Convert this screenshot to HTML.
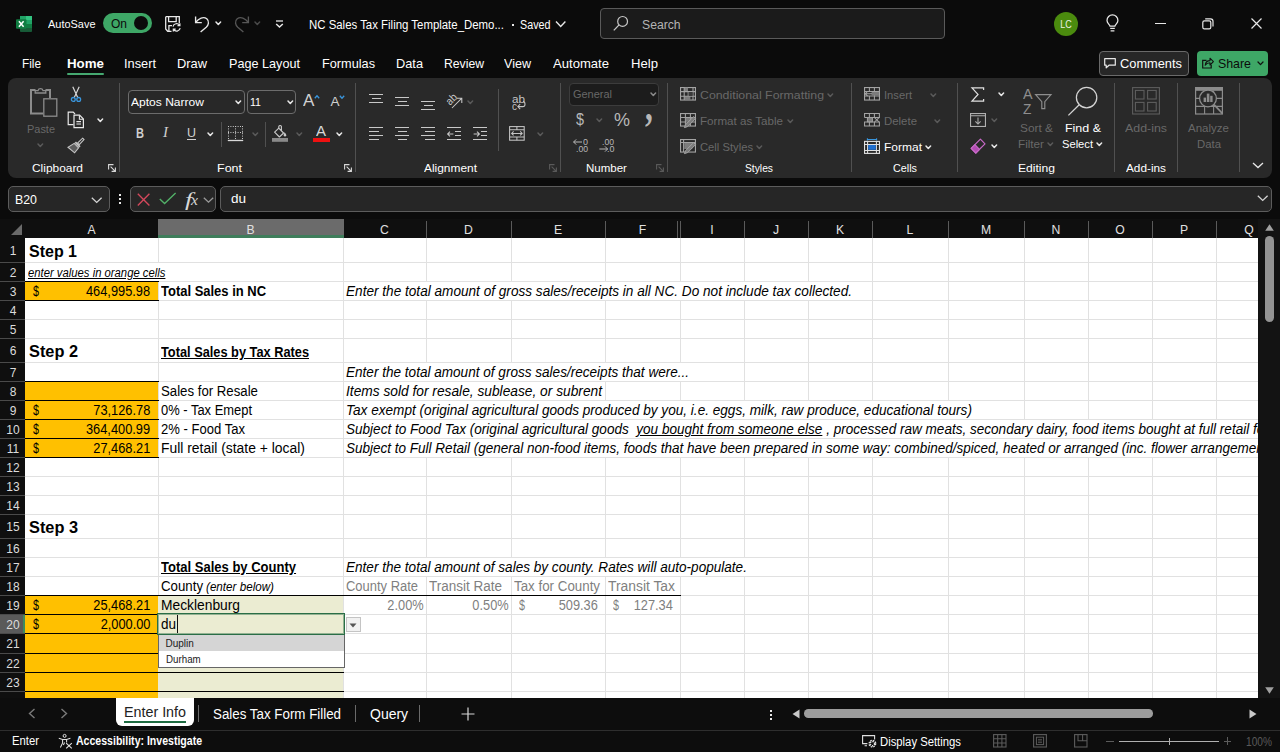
<!DOCTYPE html>
<html><head><meta charset="utf-8"><title>NC Sales Tax Filing Template_Demo - Excel</title>
<style>
html,body{margin:0;padding:0;}
body{width:1280px;height:752px;overflow:hidden;position:relative;background:#0b0b0b;font-family:"Liberation Sans",sans-serif;}
.a{position:absolute;box-sizing:border-box;}
.t{position:absolute;white-space:nowrap;overflow:visible;}
svg{overflow:visible;}
</style></head><body>
<span class="t" style="top:16.8px;height:15px;line-height:15px;font-size:11.5px;color:#fff;left:48px;transform-origin:0 50%;transform:scaleX(0.952);">AutoSave</span>
<div class="a" style="left:103px;top:13px;width:49px;height:20px;background:#3ea766;border-radius:10px;"></div>
<div class="a" style="left:134px;top:16px;width:14px;height:14px;background:#0b0b0b;border-radius:7px;"></div>
<span class="t" style="top:15.8px;height:16px;line-height:16px;font-size:12px;color:#0b0b0b;left:111px;transform-origin:0 50%;">On</span>
<span class="t" style="top:17.0px;height:16px;line-height:16px;font-size:12.5px;color:#fff;left:309.3px;transform-origin:0 50%;transform:scaleX(0.913);">NC Sales Tax Filing Template_Demo...</span>
<div class="a" style="left:511.6px;top:23.6px;width:2.4px;height:2.4px;background:#e8e8e8;"></div>
<span class="t" style="top:17.0px;height:16px;line-height:16px;font-size:12.5px;color:#fff;left:520px;transform-origin:0 50%;transform:scaleX(0.860);">Saved</span>
<div class="a" style="left:600px;top:8px;width:345px;height:31px;background:#1b1b1b;border:1px solid #5a5a5a;border-radius:4px;"></div>
<span class="t" style="top:16.6px;height:16px;line-height:16px;font-size:12.5px;color:#b4b4b4;left:642px;transform-origin:0 50%;transform:scaleX(0.975);">Search</span>
<div class="a" style="left:1054px;top:12px;width:24px;height:24px;background:#4b8b0e;border-radius:12px;"></div>
<div class="t" style="top:17.2px;height:14px;line-height:14px;font-size:10.5px;color:#e8f0e0;left:866px;width:400px;text-align:center;transform-origin:50% 50%;transform:scaleX(0.856);"><span>LC</span></div>
<span class="t" style="top:54.5px;height:17px;line-height:17px;font-size:13px;color:#fff;left:22px;transform-origin:0 50%;transform:scaleX(0.907);">File</span>
<span class="t" style="top:54.5px;height:17px;line-height:17px;font-size:13px;color:#fff;font-weight:700;left:67px;transform-origin:0 50%;transform:scaleX(1.024);">Home</span>
<span class="t" style="top:54.5px;height:17px;line-height:17px;font-size:13px;color:#fff;left:124px;transform-origin:0 50%;transform:scaleX(0.984);">Insert</span>
<span class="t" style="top:54.5px;height:17px;line-height:17px;font-size:13px;color:#fff;left:177px;transform-origin:0 50%;transform:scaleX(0.989);">Draw</span>
<span class="t" style="top:54.5px;height:17px;line-height:17px;font-size:13px;color:#fff;left:229px;transform-origin:0 50%;transform:scaleX(0.972);">Page Layout</span>
<span class="t" style="top:54.5px;height:17px;line-height:17px;font-size:13px;color:#fff;left:322px;transform-origin:0 50%;transform:scaleX(0.978);">Formulas</span>
<span class="t" style="top:54.5px;height:17px;line-height:17px;font-size:13px;color:#fff;left:396px;transform-origin:0 50%;transform:scaleX(0.983);">Data</span>
<span class="t" style="top:54.5px;height:17px;line-height:17px;font-size:13px;color:#fff;left:444px;transform-origin:0 50%;transform:scaleX(0.938);">Review</span>
<span class="t" style="top:54.5px;height:17px;line-height:17px;font-size:13px;color:#fff;left:504px;transform-origin:0 50%;transform:scaleX(0.966);">View</span>
<span class="t" style="top:54.5px;height:17px;line-height:17px;font-size:13px;color:#fff;left:553px;transform-origin:0 50%;transform:scaleX(1.006);">Automate</span>
<span class="t" style="top:54.5px;height:17px;line-height:17px;font-size:13px;color:#fff;left:631px;transform-origin:0 50%;transform:scaleX(1.009);">Help</span>
<div class="a" style="left:67px;top:72.5px;width:37px;height:2px;background:#45a870;border-radius:1px;"></div>
<div class="a" style="left:1099px;top:51px;width:90px;height:24.5px;background:#272727;border:1px solid #6a6a6a;border-radius:4px;"></div>
<span class="t" style="top:54.5px;height:17px;line-height:17px;font-size:13px;color:#fff;left:1120px;transform-origin:0 50%;transform:scaleX(0.986);">Comments</span>
<div class="a" style="left:1197px;top:51px;width:71px;height:24.5px;background:#3ea766;border-radius:4px;"></div>
<span class="t" style="top:54.5px;height:17px;line-height:17px;font-size:13px;color:#0b0b0b;left:1218px;transform-origin:0 50%;transform:scaleX(0.951);">Share</span>
<div class="a" style="left:8px;top:78px;width:1264px;height:100px;background:#292929;border-radius:8px;"></div>
<div class="a" style="left:119px;top:83px;width:1px;height:89px;background:#505050;"></div>
<div class="a" style="left:355px;top:83px;width:1px;height:89px;background:#505050;"></div>
<div class="a" style="left:498px;top:89px;width:1px;height:62px;background:#505050;"></div>
<div class="a" style="left:560px;top:83px;width:1px;height:89px;background:#505050;"></div>
<div class="a" style="left:667px;top:83px;width:1px;height:89px;background:#505050;"></div>
<div class="a" style="left:851px;top:83px;width:1px;height:89px;background:#505050;"></div>
<div class="a" style="left:957px;top:83px;width:1px;height:89px;background:#505050;"></div>
<div class="a" style="left:1114px;top:83px;width:1px;height:89px;background:#505050;"></div>
<div class="a" style="left:1177px;top:83px;width:1px;height:89px;background:#505050;"></div>
<div class="a" style="left:1239px;top:83px;width:1px;height:89px;background:#505050;"></div>
<div class="a" style="left:265px;top:122px;width:1px;height:25px;background:#505050;"></div>
<span class="t" style="top:160.7px;height:15px;line-height:15px;font-size:11.5px;color:#fff;left:32px;transform-origin:0 50%;transform:scaleX(1.036);">Clipboard</span>
<span class="t" style="top:160.7px;height:15px;line-height:15px;font-size:11.5px;color:#fff;left:217px;transform-origin:0 50%;transform:scaleX(1.086);">Font</span>
<span class="t" style="top:160.7px;height:15px;line-height:15px;font-size:11.5px;color:#fff;left:424px;transform-origin:0 50%;transform:scaleX(1.036);">Alignment</span>
<span class="t" style="top:160.7px;height:15px;line-height:15px;font-size:11.5px;color:#fff;left:586px;transform-origin:0 50%;">Number</span>
<span class="t" style="top:160.7px;height:15px;line-height:15px;font-size:11.5px;color:#fff;left:745px;transform-origin:0 50%;transform:scaleX(0.894);">Styles</span>
<span class="t" style="top:160.7px;height:15px;line-height:15px;font-size:11.5px;color:#fff;left:893px;transform-origin:0 50%;transform:scaleX(0.939);">Cells</span>
<span class="t" style="top:160.7px;height:15px;line-height:15px;font-size:11.5px;color:#fff;left:1018px;transform-origin:0 50%;transform:scaleX(1.052);">Editing</span>
<span class="t" style="top:160.7px;height:15px;line-height:15px;font-size:11.5px;color:#fff;left:1126px;transform-origin:0 50%;transform:scaleX(1.026);">Add-ins</span>
<span class="t" style="top:121.5px;height:15px;line-height:15px;font-size:11.5px;color:#686868;left:27px;transform-origin:0 50%;transform:scaleX(0.952);">Paste</span>
<div class="a" style="left:128px;top:90px;width:117px;height:24px;background:#282828;border:1px solid #6c6c6c;border-radius:4px;"></div>
<span class="t" style="top:94.5px;height:15px;line-height:15px;font-size:11.5px;color:#fff;left:131px;transform-origin:0 50%;transform:scaleX(1.048);">Aptos Narrow</span>
<div class="a" style="left:247px;top:90px;width:49px;height:24px;background:#282828;border:1px solid #6c6c6c;border-radius:4px;"></div>
<span class="t" style="top:94.5px;height:15px;line-height:15px;font-size:11.5px;color:#fff;left:250px;transform-origin:0 50%;transform:scaleX(0.920);">11</span>
<span class="t" style="top:124.0px;height:18px;line-height:18px;font-size:14px;color:#d0d0d0;font-weight:700;left:136px;transform-origin:0 50%;transform:scaleX(0.790);">B</span>
<span class="t" style="top:124.0px;height:18px;line-height:18px;font-size:14px;color:#d0d0d0;font-style:italic;font-family:'Liberation Serif',serif;left:163px;transform-origin:0 50%;transform:scaleX(1.070);">I</span>
<span class="t" style="top:124.0px;height:18px;line-height:18px;font-size:13.5px;color:#d0d0d0;left:187px;transform-origin:0 50%;transform:scaleX(0.923);">U</span>
<div class="a" style="left:186.6px;top:139.2px;width:9.6px;height:1px;background:#d0d0d0;"></div>
<div class="a" style="left:569px;top:83px;width:90px;height:23px;background:#1c1c1c;border:1px solid #3c3c3c;border-radius:4px;"></div>
<span class="t" style="top:86.5px;height:15px;line-height:15px;font-size:11.5px;color:#686868;left:573px;transform-origin:0 50%;transform:scaleX(0.953);">General</span>
<span class="t" style="top:109.0px;height:22px;line-height:22px;font-size:17px;color:#b8b8b8;left:576px;transform-origin:0 50%;transform:scaleX(0.845);">$</span>
<span class="t" style="top:108.5px;height:23px;line-height:23px;font-size:18px;color:#b8b8b8;left:614px;transform-origin:0 50%;">%</span>
<span class="t" style="top:78.5px;height:55px;line-height:55px;font-size:42px;color:#b8b8b8;font-weight:700;font-family:'Liberation Serif',serif;left:644.5px;transform-origin:0 50%;transform:scaleX(0.743);">,</span>
<span class="t" style="top:87.5px;height:15px;line-height:15px;font-size:11.5px;color:#686868;left:700px;transform-origin:0 50%;transform:scaleX(1.072);">Conditional Formatting</span>
<span class="t" style="top:113.5px;height:15px;line-height:15px;font-size:11.5px;color:#686868;left:700px;transform-origin:0 50%;transform:scaleX(1.009);">Format as Table</span>
<span class="t" style="top:139.5px;height:15px;line-height:15px;font-size:11.5px;color:#686868;left:700px;transform-origin:0 50%;transform:scaleX(0.976);">Cell Styles</span>
<span class="t" style="top:87.5px;height:15px;line-height:15px;font-size:11.5px;color:#686868;left:884px;transform-origin:0 50%;transform:scaleX(0.973);">Insert</span>
<span class="t" style="top:113.5px;height:15px;line-height:15px;font-size:11.5px;color:#686868;left:884px;transform-origin:0 50%;transform:scaleX(0.992);">Delete</span>
<span class="t" style="top:139.5px;height:15px;line-height:15px;font-size:11.5px;color:#fff;left:884px;transform-origin:0 50%;transform:scaleX(1.043);">Format</span>
<span class="t" style="top:120.5px;height:15px;line-height:15px;font-size:11.5px;color:#686868;left:1020px;transform-origin:0 50%;transform:scaleX(1.032);">Sort &amp;</span>
<span class="t" style="top:136.7px;height:15px;line-height:15px;font-size:11.5px;color:#686868;left:1018px;transform-origin:0 50%;transform:scaleX(1.017);">Filter</span>
<span class="t" style="top:120.5px;height:15px;line-height:15px;font-size:11.5px;color:#fff;left:1065px;transform-origin:0 50%;transform:scaleX(1.083);">Find &amp;</span>
<span class="t" style="top:136.7px;height:15px;line-height:15px;font-size:11.5px;color:#fff;left:1062px;transform-origin:0 50%;transform:scaleX(0.970);">Select</span>
<span class="t" style="top:120.5px;height:15px;line-height:15px;font-size:11.5px;color:#686868;left:1125px;transform-origin:0 50%;transform:scaleX(1.077);">Add-ins</span>
<span class="t" style="top:120.5px;height:15px;line-height:15px;font-size:11.5px;color:#686868;left:1188px;transform-origin:0 50%;">Analyze</span>
<span class="t" style="top:136.7px;height:15px;line-height:15px;font-size:11.5px;color:#686868;left:1197px;transform-origin:0 50%;transform:scaleX(0.988);">Data</span>
<div class="a" style="left:8px;top:186px;width:102px;height:26px;background:#262626;border:1px solid #5c5c5c;border-radius:5px;"></div>
<span class="t" style="top:190.5px;height:17px;line-height:17px;font-size:13px;color:#fff;left:15px;transform-origin:0 50%;transform:scaleX(0.951);">B20</span>
<div class="a" style="left:130px;top:186px;width:86px;height:26px;background:#262626;border:1px solid #5c5c5c;border-radius:5px;"></div>
<div class="a" style="left:220px;top:186px;width:1052px;height:26px;background:#262626;border:1px solid #5c5c5c;border-radius:5px;"></div>
<span class="t" style="top:190.0px;height:18px;line-height:18px;font-size:13.5px;color:#fff;left:231px;transform-origin:0 50%;">du</span>
<span class="t" style="top:186.5px;height:25px;line-height:25px;font-size:19px;color:#d8d8d8;font-style:italic;font-family:'Liberation Serif',serif;left:184.6px;transform-origin:0 50%;transform:scaleX(1.401);">f</span>
<span class="t" style="top:190.4px;height:20px;line-height:20px;font-size:15px;color:#d8d8d8;font-style:italic;font-family:'Liberation Serif',serif;left:191.2px;transform-origin:0 50%;transform:scaleX(1.049);">x</span>
<div class="a" style="left:118.8px;top:193.8px;width:2.4px;height:2.4px;background:#e8e8e8;"></div>
<div class="a" style="left:118.8px;top:197.8px;width:2.4px;height:2.4px;background:#e8e8e8;"></div>
<div class="a" style="left:118.8px;top:201.8px;width:2.4px;height:2.4px;background:#e8e8e8;"></div>
<div class="a" style="left:0px;top:219px;width:1280px;height:479px;background:#0f0f0f;"></div>
<div class="a" style="left:25px;top:238px;width:1233px;height:460px;background:#ffffff;"></div>
<div class="a" style="left:158px;top:219px;width:186px;height:19px;background:#6b6b6b;"></div>
<div class="a" style="left:158px;top:235px;width:186px;height:3px;background:#3f7d5b;"></div>
<div class="t" style="top:221.5px;height:16px;line-height:16px;font-size:12.2px;color:#e0e0e0;left:-108.5px;width:400px;text-align:center;transform-origin:50% 50%;"><span>A</span></div>
<div class="t" style="top:221.5px;height:16px;line-height:16px;font-size:12.2px;color:#e0e0e0;left:50.5px;width:400px;text-align:center;transform-origin:50% 50%;"><span>B</span></div>
<div class="t" style="top:221.5px;height:16px;line-height:16px;font-size:12.2px;color:#e0e0e0;left:184.5px;width:400px;text-align:center;transform-origin:50% 50%;"><span>C</span></div>
<div class="t" style="top:221.5px;height:16px;line-height:16px;font-size:12.2px;color:#e0e0e0;left:268.5px;width:400px;text-align:center;transform-origin:50% 50%;"><span>D</span></div>
<div class="a" style="left:426px;top:221px;width:1px;height:17px;background:#5a5a5a;"></div>
<div class="t" style="top:221.5px;height:16px;line-height:16px;font-size:12.2px;color:#e0e0e0;left:358.0px;width:400px;text-align:center;transform-origin:50% 50%;"><span>E</span></div>
<div class="a" style="left:511px;top:221px;width:1px;height:17px;background:#5a5a5a;"></div>
<div class="t" style="top:221.5px;height:16px;line-height:16px;font-size:12.2px;color:#e0e0e0;left:442.5px;width:400px;text-align:center;transform-origin:50% 50%;"><span>F</span></div>
<div class="a" style="left:605px;top:221px;width:1px;height:17px;background:#5a5a5a;"></div>
<div class="t" style="top:221.5px;height:16px;line-height:16px;font-size:12.2px;color:#e0e0e0;left:512.0px;width:400px;text-align:center;transform-origin:50% 50%;"><span>I</span></div>
<div class="a" style="left:680px;top:221px;width:1px;height:17px;background:#5a5a5a;"></div>
<div class="t" style="top:221.5px;height:16px;line-height:16px;font-size:12.2px;color:#e0e0e0;left:576.0px;width:400px;text-align:center;transform-origin:50% 50%;"><span>J</span></div>
<div class="a" style="left:744px;top:221px;width:1px;height:17px;background:#5a5a5a;"></div>
<div class="t" style="top:221.5px;height:16px;line-height:16px;font-size:12.2px;color:#e0e0e0;left:640.0px;width:400px;text-align:center;transform-origin:50% 50%;"><span>K</span></div>
<div class="a" style="left:808px;top:221px;width:1px;height:17px;background:#5a5a5a;"></div>
<div class="t" style="top:221.5px;height:16px;line-height:16px;font-size:12.2px;color:#e0e0e0;left:710.0px;width:400px;text-align:center;transform-origin:50% 50%;"><span>L</span></div>
<div class="a" style="left:872px;top:221px;width:1px;height:17px;background:#5a5a5a;"></div>
<div class="t" style="top:221.5px;height:16px;line-height:16px;font-size:12.2px;color:#e0e0e0;left:786.0px;width:400px;text-align:center;transform-origin:50% 50%;"><span>M</span></div>
<div class="a" style="left:948px;top:221px;width:1px;height:17px;background:#5a5a5a;"></div>
<div class="t" style="top:221.5px;height:16px;line-height:16px;font-size:12.2px;color:#e0e0e0;left:856.0px;width:400px;text-align:center;transform-origin:50% 50%;"><span>N</span></div>
<div class="a" style="left:1024px;top:221px;width:1px;height:17px;background:#5a5a5a;"></div>
<div class="t" style="top:221.5px;height:16px;line-height:16px;font-size:12.2px;color:#e0e0e0;left:920.0px;width:400px;text-align:center;transform-origin:50% 50%;"><span>O</span></div>
<div class="a" style="left:1088px;top:221px;width:1px;height:17px;background:#5a5a5a;"></div>
<div class="t" style="top:221.5px;height:16px;line-height:16px;font-size:12.2px;color:#e0e0e0;left:984.0px;width:400px;text-align:center;transform-origin:50% 50%;"><span>P</span></div>
<div class="a" style="left:1152px;top:221px;width:1px;height:17px;background:#5a5a5a;"></div>
<div class="t" style="top:221.5px;height:16px;line-height:16px;font-size:12.2px;color:#e0e0e0;left:1049.0px;width:400px;text-align:center;transform-origin:50% 50%;"><span>Q</span></div>
<div class="a" style="left:1216px;top:221px;width:1px;height:17px;background:#5a5a5a;"></div>
<div class="a" style="left:426px;top:221px;width:1px;height:17px;background:#5a5a5a;"></div>
<div class="a" style="left:677px;top:221px;width:1px;height:17px;background:#5a5a5a;"></div>
<svg class="a" style="left:10px;top:223px;" width="13" height="13" viewBox="0 0 13 13"><path d="M12 1 L12 12 L1 12 Z" fill="#6a6a6a"/></svg>
<div class="a" style="left:0px;top:614px;width:25px;height:19px;background:#5a5a5a;border-right:2px solid #3d8a5f;"></div>
<div class="t" style="top:242.3px;height:18px;line-height:18px;font-size:13.5px;color:#dcdcdc;left:-187px;width:400px;text-align:center;transform-origin:50% 50%;transform:scaleX(0.89);"><span>1</span></div>
<div class="a" style="left:0px;top:262px;width:25px;height:1px;background:#4a4a4a;"></div>
<div class="t" style="top:263.8px;height:18px;line-height:18px;font-size:13.5px;color:#dcdcdc;left:-187px;width:400px;text-align:center;transform-origin:50% 50%;transform:scaleX(0.89);"><span>2</span></div>
<div class="a" style="left:0px;top:281px;width:25px;height:1px;background:#4a4a4a;"></div>
<div class="t" style="top:282.8px;height:18px;line-height:18px;font-size:13.5px;color:#dcdcdc;left:-187px;width:400px;text-align:center;transform-origin:50% 50%;transform:scaleX(0.89);"><span>3</span></div>
<div class="a" style="left:0px;top:300px;width:25px;height:1px;background:#4a4a4a;"></div>
<div class="t" style="top:301.8px;height:18px;line-height:18px;font-size:13.5px;color:#dcdcdc;left:-187px;width:400px;text-align:center;transform-origin:50% 50%;transform:scaleX(0.89);"><span>4</span></div>
<div class="a" style="left:0px;top:319px;width:25px;height:1px;background:#4a4a4a;"></div>
<div class="t" style="top:320.8px;height:18px;line-height:18px;font-size:13.5px;color:#dcdcdc;left:-187px;width:400px;text-align:center;transform-origin:50% 50%;transform:scaleX(0.89);"><span>5</span></div>
<div class="a" style="left:0px;top:338px;width:25px;height:1px;background:#4a4a4a;"></div>
<div class="t" style="top:342.3px;height:18px;line-height:18px;font-size:13.5px;color:#dcdcdc;left:-187px;width:400px;text-align:center;transform-origin:50% 50%;transform:scaleX(0.89);"><span>6</span></div>
<div class="a" style="left:0px;top:362px;width:25px;height:1px;background:#4a4a4a;"></div>
<div class="t" style="top:363.8px;height:18px;line-height:18px;font-size:13.5px;color:#dcdcdc;left:-187px;width:400px;text-align:center;transform-origin:50% 50%;transform:scaleX(0.89);"><span>7</span></div>
<div class="a" style="left:0px;top:381px;width:25px;height:1px;background:#4a4a4a;"></div>
<div class="t" style="top:382.8px;height:18px;line-height:18px;font-size:13.5px;color:#dcdcdc;left:-187px;width:400px;text-align:center;transform-origin:50% 50%;transform:scaleX(0.89);"><span>8</span></div>
<div class="a" style="left:0px;top:400px;width:25px;height:1px;background:#4a4a4a;"></div>
<div class="t" style="top:401.8px;height:18px;line-height:18px;font-size:13.5px;color:#dcdcdc;left:-187px;width:400px;text-align:center;transform-origin:50% 50%;transform:scaleX(0.89);"><span>9</span></div>
<div class="a" style="left:0px;top:419px;width:25px;height:1px;background:#4a4a4a;"></div>
<div class="t" style="top:420.8px;height:18px;line-height:18px;font-size:13.5px;color:#dcdcdc;left:-187px;width:400px;text-align:center;transform-origin:50% 50%;transform:scaleX(0.89);"><span>10</span></div>
<div class="a" style="left:0px;top:438px;width:25px;height:1px;background:#4a4a4a;"></div>
<div class="t" style="top:439.8px;height:18px;line-height:18px;font-size:13.5px;color:#dcdcdc;left:-187px;width:400px;text-align:center;transform-origin:50% 50%;transform:scaleX(0.89);"><span>11</span></div>
<div class="a" style="left:0px;top:457px;width:25px;height:1px;background:#4a4a4a;"></div>
<div class="t" style="top:458.8px;height:18px;line-height:18px;font-size:13.5px;color:#dcdcdc;left:-187px;width:400px;text-align:center;transform-origin:50% 50%;transform:scaleX(0.89);"><span>12</span></div>
<div class="a" style="left:0px;top:476px;width:25px;height:1px;background:#4a4a4a;"></div>
<div class="t" style="top:477.8px;height:18px;line-height:18px;font-size:13.5px;color:#dcdcdc;left:-187px;width:400px;text-align:center;transform-origin:50% 50%;transform:scaleX(0.89);"><span>13</span></div>
<div class="a" style="left:0px;top:495px;width:25px;height:1px;background:#4a4a4a;"></div>
<div class="t" style="top:496.8px;height:18px;line-height:18px;font-size:13.5px;color:#dcdcdc;left:-187px;width:400px;text-align:center;transform-origin:50% 50%;transform:scaleX(0.89);"><span>14</span></div>
<div class="a" style="left:0px;top:514px;width:25px;height:1px;background:#4a4a4a;"></div>
<div class="t" style="top:518.3px;height:18px;line-height:18px;font-size:13.5px;color:#dcdcdc;left:-187px;width:400px;text-align:center;transform-origin:50% 50%;transform:scaleX(0.89);"><span>15</span></div>
<div class="a" style="left:0px;top:538px;width:25px;height:1px;background:#4a4a4a;"></div>
<div class="t" style="top:539.8px;height:18px;line-height:18px;font-size:13.5px;color:#dcdcdc;left:-187px;width:400px;text-align:center;transform-origin:50% 50%;transform:scaleX(0.89);"><span>16</span></div>
<div class="a" style="left:0px;top:557px;width:25px;height:1px;background:#4a4a4a;"></div>
<div class="t" style="top:558.8px;height:18px;line-height:18px;font-size:13.5px;color:#dcdcdc;left:-187px;width:400px;text-align:center;transform-origin:50% 50%;transform:scaleX(0.89);"><span>17</span></div>
<div class="a" style="left:0px;top:576px;width:25px;height:1px;background:#4a4a4a;"></div>
<div class="t" style="top:577.8px;height:18px;line-height:18px;font-size:13.5px;color:#dcdcdc;left:-187px;width:400px;text-align:center;transform-origin:50% 50%;transform:scaleX(0.89);"><span>18</span></div>
<div class="a" style="left:0px;top:595px;width:25px;height:1px;background:#4a4a4a;"></div>
<div class="t" style="top:596.8px;height:18px;line-height:18px;font-size:13.5px;color:#dcdcdc;left:-187px;width:400px;text-align:center;transform-origin:50% 50%;transform:scaleX(0.89);"><span>19</span></div>
<div class="a" style="left:0px;top:614px;width:25px;height:1px;background:#4a4a4a;"></div>
<div class="t" style="top:615.8px;height:18px;line-height:18px;font-size:13.5px;color:#dcdcdc;left:-187px;width:400px;text-align:center;transform-origin:50% 50%;transform:scaleX(0.89);"><span>20</span></div>
<div class="a" style="left:0px;top:633px;width:25px;height:1px;background:#4a4a4a;"></div>
<div class="t" style="top:635.3px;height:18px;line-height:18px;font-size:13.5px;color:#dcdcdc;left:-187px;width:400px;text-align:center;transform-origin:50% 50%;transform:scaleX(0.89);"><span>21</span></div>
<div class="a" style="left:0px;top:653px;width:25px;height:1px;background:#4a4a4a;"></div>
<div class="t" style="top:654.8px;height:18px;line-height:18px;font-size:13.5px;color:#dcdcdc;left:-187px;width:400px;text-align:center;transform-origin:50% 50%;transform:scaleX(0.89);"><span>22</span></div>
<div class="a" style="left:0px;top:672px;width:25px;height:1px;background:#4a4a4a;"></div>
<div class="t" style="top:673.8px;height:18px;line-height:18px;font-size:13.5px;color:#dcdcdc;left:-187px;width:400px;text-align:center;transform-origin:50% 50%;transform:scaleX(0.89);"><span>23</span></div>
<div class="a" style="left:0px;top:691px;width:25px;height:1px;background:#4a4a4a;"></div>
<div class="t" style="top:693.5px;height:18px;line-height:18px;font-size:13.5px;color:#dcdcdc;left:-187px;width:400px;text-align:center;transform-origin:50% 50%;transform:scaleX(0.915);"><span>24</span></div>
<div class="a" style="left:25px;top:262px;width:1233px;height:1px;background:#e1e1e1;"></div>
<div class="a" style="left:25px;top:281px;width:1233px;height:1px;background:#e1e1e1;"></div>
<div class="a" style="left:25px;top:300px;width:1233px;height:1px;background:#e1e1e1;"></div>
<div class="a" style="left:25px;top:319px;width:1233px;height:1px;background:#e1e1e1;"></div>
<div class="a" style="left:25px;top:338px;width:1233px;height:1px;background:#e1e1e1;"></div>
<div class="a" style="left:25px;top:362px;width:1233px;height:1px;background:#e1e1e1;"></div>
<div class="a" style="left:25px;top:381px;width:1233px;height:1px;background:#e1e1e1;"></div>
<div class="a" style="left:25px;top:400px;width:1233px;height:1px;background:#e1e1e1;"></div>
<div class="a" style="left:25px;top:419px;width:1233px;height:1px;background:#e1e1e1;"></div>
<div class="a" style="left:25px;top:438px;width:1233px;height:1px;background:#e1e1e1;"></div>
<div class="a" style="left:25px;top:457px;width:1233px;height:1px;background:#e1e1e1;"></div>
<div class="a" style="left:25px;top:476px;width:1233px;height:1px;background:#e1e1e1;"></div>
<div class="a" style="left:25px;top:495px;width:1233px;height:1px;background:#e1e1e1;"></div>
<div class="a" style="left:25px;top:514px;width:1233px;height:1px;background:#e1e1e1;"></div>
<div class="a" style="left:25px;top:538px;width:1233px;height:1px;background:#e1e1e1;"></div>
<div class="a" style="left:25px;top:557px;width:1233px;height:1px;background:#e1e1e1;"></div>
<div class="a" style="left:25px;top:576px;width:1233px;height:1px;background:#e1e1e1;"></div>
<div class="a" style="left:25px;top:595px;width:1233px;height:1px;background:#e1e1e1;"></div>
<div class="a" style="left:25px;top:614px;width:1233px;height:1px;background:#e1e1e1;"></div>
<div class="a" style="left:25px;top:633px;width:1233px;height:1px;background:#e1e1e1;"></div>
<div class="a" style="left:25px;top:653px;width:1233px;height:1px;background:#e1e1e1;"></div>
<div class="a" style="left:25px;top:672px;width:1233px;height:1px;background:#e1e1e1;"></div>
<div class="a" style="left:25px;top:691px;width:1233px;height:1px;background:#e1e1e1;"></div>
<div class="a" style="left:158px;top:238px;width:1px;height:460px;background:#e1e1e1;"></div>
<div class="a" style="left:343px;top:238px;width:1px;height:460px;background:#e1e1e1;"></div>
<div class="a" style="left:426px;top:238px;width:1px;height:460px;background:#e1e1e1;"></div>
<div class="a" style="left:511px;top:238px;width:1px;height:460px;background:#e1e1e1;"></div>
<div class="a" style="left:605px;top:238px;width:1px;height:460px;background:#e1e1e1;"></div>
<div class="a" style="left:680px;top:238px;width:1px;height:460px;background:#e1e1e1;"></div>
<div class="a" style="left:744px;top:238px;width:1px;height:460px;background:#e1e1e1;"></div>
<div class="a" style="left:808px;top:238px;width:1px;height:460px;background:#e1e1e1;"></div>
<div class="a" style="left:872px;top:238px;width:1px;height:460px;background:#e1e1e1;"></div>
<div class="a" style="left:948px;top:238px;width:1px;height:460px;background:#e1e1e1;"></div>
<div class="a" style="left:1024px;top:238px;width:1px;height:460px;background:#e1e1e1;"></div>
<div class="a" style="left:1088px;top:238px;width:1px;height:460px;background:#e1e1e1;"></div>
<div class="a" style="left:1152px;top:238px;width:1px;height:460px;background:#e1e1e1;"></div>
<div class="a" style="left:1216px;top:238px;width:1px;height:460px;background:#e1e1e1;"></div>
<div class="a" style="left:158px;top:263px;width:12px;height:18px;background:#fff;"></div>
<div class="a" style="left:344px;top:282px;width:516px;height:18px;background:#fff;"></div>
<div class="a" style="left:344px;top:363px;width:356px;height:18px;background:#fff;"></div>
<div class="a" style="left:344px;top:382px;width:261px;height:18px;background:#fff;"></div>
<div class="a" style="left:344px;top:401px;width:636px;height:18px;background:#fff;"></div>
<div class="a" style="left:344px;top:420px;width:914px;height:18px;background:#fff;"></div>
<div class="a" style="left:344px;top:439px;width:914px;height:18px;background:#fff;"></div>
<div class="a" style="left:344px;top:558px;width:416px;height:18px;background:#fff;"></div>
<div class="a" style="left:25px;top:281px;width:133px;height:19px;background:#ffc000;"></div>
<div class="a" style="left:25px;top:381px;width:133px;height:76px;background:#ffc000;"></div>
<div class="a" style="left:25px;top:595px;width:133px;height:116px;background:#ffc000;"></div>
<div class="a" style="left:158px;top:595px;width:185px;height:116px;background:#ebecd2;"></div>
<div class="a" style="left:25px;top:698px;width:1240px;height:0px;"></div>
<div class="a" style="left:25px;top:281px;width:134px;height:1px;background:#000;"></div>
<div class="a" style="left:25px;top:300px;width:134px;height:1px;background:#000;"></div>
<div class="a" style="left:25px;top:381px;width:134px;height:1px;background:#000;"></div>
<div class="a" style="left:25px;top:400px;width:134px;height:1px;background:#000;"></div>
<div class="a" style="left:25px;top:419px;width:134px;height:1px;background:#000;"></div>
<div class="a" style="left:25px;top:438px;width:134px;height:1px;background:#000;"></div>
<div class="a" style="left:25px;top:457px;width:134px;height:1px;background:#000;"></div>
<div class="a" style="left:25px;top:595px;width:656px;height:1px;background:#000;"></div>
<div class="a" style="left:25px;top:614px;width:134px;height:1px;background:#000;"></div>
<div class="a" style="left:25px;top:633px;width:134px;height:1px;background:#000;"></div>
<div class="a" style="left:25px;top:653px;width:134px;height:1px;background:#000;"></div>
<div class="a" style="left:25px;top:672px;width:134px;height:1px;background:#000;"></div>
<div class="a" style="left:25px;top:691px;width:134px;height:1px;background:#000;"></div>
<div class="a" style="left:158px;top:653px;width:186px;height:1px;background:#000;"></div>
<div class="a" style="left:158px;top:672px;width:186px;height:1px;background:#000;"></div>
<div class="a" style="left:158px;top:691px;width:186px;height:1px;background:#000;"></div>
<div class="a" style="left:158px;top:614px;width:186px;height:1px;background:#c8c8b4;"></div>
<span class="t" style="top:241.0px;height:22px;line-height:22px;font-size:17px;color:#000;font-weight:700;left:29px;transform-origin:0 50%;transform:scaleX(0.941);">Step 1</span>
<span class="t" style="top:341.2px;height:22px;line-height:22px;font-size:17px;color:#000;font-weight:700;left:29px;transform-origin:0 50%;transform:scaleX(0.960);">Step 2</span>
<span class="t" style="top:517.0px;height:22px;line-height:22px;font-size:17px;color:#000;font-weight:700;left:29px;transform-origin:0 50%;transform:scaleX(0.960);">Step 3</span>
<span class="t" style="top:265.2px;height:16px;line-height:16px;font-size:12.5px;color:#000;font-style:italic;text-decoration:underline;left:28px;transform-origin:0 50%;transform:scaleX(0.903);">enter values in orange cells</span>
<span class="t" style="top:282.2px;height:18px;line-height:18px;font-size:14px;color:#000;left:33px;transform-origin:0 50%;transform:scaleX(0.770);">$</span>
<span class="t" style="top:282.2px;height:18px;line-height:18px;font-size:14px;color:#000;right:1130px;transform-origin:100% 50%;transform:scaleX(0.915);">464,995.98</span>
<span class="t" style="top:401.2px;height:18px;line-height:18px;font-size:14px;color:#000;left:33px;transform-origin:0 50%;transform:scaleX(0.770);">$</span>
<span class="t" style="top:401.2px;height:18px;line-height:18px;font-size:14px;color:#000;right:1130px;transform-origin:100% 50%;transform:scaleX(0.915);">73,126.78</span>
<span class="t" style="top:420.2px;height:18px;line-height:18px;font-size:14px;color:#000;left:33px;transform-origin:0 50%;transform:scaleX(0.770);">$</span>
<span class="t" style="top:420.2px;height:18px;line-height:18px;font-size:14px;color:#000;right:1130px;transform-origin:100% 50%;transform:scaleX(0.915);">364,400.99</span>
<span class="t" style="top:439.2px;height:18px;line-height:18px;font-size:14px;color:#000;left:33px;transform-origin:0 50%;transform:scaleX(0.770);">$</span>
<span class="t" style="top:439.2px;height:18px;line-height:18px;font-size:14px;color:#000;right:1130px;transform-origin:100% 50%;transform:scaleX(0.915);">27,468.21</span>
<span class="t" style="top:596.2px;height:18px;line-height:18px;font-size:14px;color:#000;left:33px;transform-origin:0 50%;transform:scaleX(0.770);">$</span>
<span class="t" style="top:596.2px;height:18px;line-height:18px;font-size:14px;color:#000;right:1130px;transform-origin:100% 50%;transform:scaleX(0.915);">25,468.21</span>
<span class="t" style="top:615.2px;height:18px;line-height:18px;font-size:14px;color:#000;left:33px;transform-origin:0 50%;transform:scaleX(0.770);">$</span>
<span class="t" style="top:615.2px;height:18px;line-height:18px;font-size:14px;color:#000;right:1130px;transform-origin:100% 50%;transform:scaleX(0.915);">2,000.00</span>
<span class="t" style="top:282.2px;height:18px;line-height:18px;font-size:14px;color:#000;font-weight:700;left:161px;transform-origin:0 50%;transform:scaleX(0.927);">Total Sales in NC</span>
<span class="t" style="top:282.2px;height:18px;line-height:18px;font-size:14px;color:#000;font-style:italic;left:346px;transform-origin:0 50%;transform:scaleX(0.972);">Enter the total amount of gross sales/receipts in all NC. Do not include tax collected.</span>
<span class="t" style="top:343.0px;height:18px;line-height:18px;font-size:14px;color:#000;font-weight:700;text-decoration:underline;left:161px;transform-origin:0 50%;transform:scaleX(0.913);">Total Sales by Tax Rates</span>
<span class="t" style="top:363.2px;height:18px;line-height:18px;font-size:14px;color:#000;font-style:italic;left:346px;transform-origin:0 50%;transform:scaleX(0.969);">Enter the total amount of gross sales/receipts that were...</span>
<span class="t" style="top:382.2px;height:18px;line-height:18px;font-size:14px;color:#000;left:161px;transform-origin:0 50%;transform:scaleX(0.944);">Sales for Resale</span>
<span class="t" style="top:382.2px;height:18px;line-height:18px;font-size:14px;color:#000;font-style:italic;left:346px;transform-origin:0 50%;transform:scaleX(0.982);">Items sold for resale, sublease, or subrent</span>
<span class="t" style="top:401.2px;height:18px;line-height:18px;font-size:14px;color:#000;left:161px;transform-origin:0 50%;transform:scaleX(0.923);">0% - Tax Emept</span>
<span class="t" style="top:401.2px;height:18px;line-height:18px;font-size:14px;color:#000;font-style:italic;left:346px;transform-origin:0 50%;transform:scaleX(0.971);">Tax exempt (original agricultural goods produced by you, i.e. eggs, milk, raw produce, educational tours)</span>
<span class="t" style="top:420.2px;height:18px;line-height:18px;font-size:14px;color:#000;left:161px;transform-origin:0 50%;transform:scaleX(0.933);">2% - Food Tax</span>
<span class="t" style="top:439.2px;height:18px;line-height:18px;font-size:14px;color:#000;left:161px;transform-origin:0 50%;transform:scaleX(0.992);">Full retail (state + local)</span>
<div class="a" style="left:344px;top:420px;width:914px;height:38px;overflow:hidden;">
<span class="t" style="top:0.2px;height:18px;line-height:18px;font-size:14px;color:#000;font-style:italic;left:2px;transform-origin:0 50%;transform:scaleX(0.968);">Subject to Food Tax (original agricultural goods&nbsp; <u>you bought from someone else</u> , processed raw meats, secondary dairy, food items bought at full retail for</span>
<span class="t" style="top:19.2px;height:18px;line-height:18px;font-size:14px;color:#000;font-style:italic;left:2px;transform-origin:0 50%;transform:scaleX(0.965);">Subject to Full Retail (general non-food items, foods that have been prepared in some way: combined/spiced, heated or arranged (inc. flower arrangements</span>
</div>
<span class="t" style="top:558.0px;height:18px;line-height:18px;font-size:14px;color:#000;font-weight:700;text-decoration:underline;left:161px;transform-origin:0 50%;transform:scaleX(0.930);">Total Sales by County</span>
<span class="t" style="top:558.2px;height:18px;line-height:18px;font-size:14px;color:#000;font-style:italic;left:346px;transform-origin:0 50%;transform:scaleX(0.969);">Enter the total amount of sales by county. Rates will auto-populate.</span>
<span class="t" style="top:577.2px;height:18px;line-height:18px;font-size:14px;color:#000;left:161px;transform-origin:0 50%;transform:scaleX(0.947);">County</span>
<span class="t" style="top:578.7px;height:16px;line-height:16px;font-size:12.5px;color:#000;font-style:italic;left:206px;transform-origin:0 50%;transform:scaleX(0.932);">(enter below)</span>
<span class="t" style="top:577.2px;height:18px;line-height:18px;font-size:14px;color:#7f7f7f;left:346px;transform-origin:0 50%;transform:scaleX(0.925);">County Rate</span>
<span class="t" style="top:577.2px;height:18px;line-height:18px;font-size:14px;color:#7f7f7f;left:429px;transform-origin:0 50%;transform:scaleX(0.964);">Transit Rate</span>
<span class="t" style="top:577.2px;height:18px;line-height:18px;font-size:14px;color:#7f7f7f;left:514px;transform-origin:0 50%;transform:scaleX(0.953);">Tax for County</span>
<span class="t" style="top:577.2px;height:18px;line-height:18px;font-size:14px;color:#7f7f7f;left:608px;transform-origin:0 50%;transform:scaleX(0.990);">Transit Tax</span>
<span class="t" style="top:596.2px;height:18px;line-height:18px;font-size:14px;color:#000;left:161px;transform-origin:0 50%;transform:scaleX(0.986);">Mecklenburg</span>
<span class="t" style="top:596.2px;height:18px;line-height:18px;font-size:14px;color:#7f7f7f;right:856px;transform-origin:100% 50%;transform:scaleX(0.915);">2.00%</span>
<span class="t" style="top:596.2px;height:18px;line-height:18px;font-size:14px;color:#7f7f7f;right:771px;transform-origin:100% 50%;transform:scaleX(0.915);">0.50%</span>
<span class="t" style="top:596.2px;height:18px;line-height:18px;font-size:14px;color:#7f7f7f;left:519px;transform-origin:0 50%;transform:scaleX(0.770);">$</span>
<span class="t" style="top:596.2px;height:18px;line-height:18px;font-size:14px;color:#7f7f7f;right:682px;transform-origin:100% 50%;transform:scaleX(0.915);">509.36</span>
<span class="t" style="top:596.2px;height:18px;line-height:18px;font-size:14px;color:#7f7f7f;left:613px;transform-origin:0 50%;transform:scaleX(0.770);">$</span>
<span class="t" style="top:596.2px;height:18px;line-height:18px;font-size:14px;color:#7f7f7f;right:607px;transform-origin:100% 50%;transform:scaleX(0.915);">127.34</span>
<div class="a" style="left:157px;top:613px;width:188px;height:22px;border:1px solid #2a6e46;box-shadow:inset 0 0 0 1px rgba(42,110,70,0.45);background:#ebecd2;"></div>
<span class="t" style="top:615.2px;height:18px;line-height:18px;font-size:14px;color:#000;left:161.2px;transform-origin:0 50%;transform:scaleX(0.963);">du</span>
<div class="a" style="left:177px;top:615px;width:1px;height:18px;background:#111;"></div>
<div class="a" style="left:346px;top:616.6px;width:14.6px;height:15.6px;background:#f1f1f1;border:1px solid #c4c4c4;"></div>
<svg class="a" style="left:348.7px;top:622.6px;" width="8" height="5" viewBox="0 0 8 5"><path d="M0.5 0.5 L7.5 0.5 L4 4.5 Z" fill="#555"/></svg>
<div class="a" style="left:158px;top:634.6px;width:187px;height:33.4px;background:#fff;border:1px solid #666;border-top:none;"></div>
<div class="a" style="left:159px;top:634.6px;width:185px;height:16px;background:#d5d5d5;"></div>
<span class="t" style="top:637.0px;height:13px;line-height:13px;font-size:10px;color:#1a1a1a;left:165.5px;transform-origin:0 50%;">Duplin</span>
<span class="t" style="top:652.5px;height:13px;line-height:13px;font-size:10px;color:#1a1a1a;left:165.5px;transform-origin:0 50%;transform:scaleX(0.975);">Durham</span>
<div class="a" style="left:1258px;top:219px;width:22px;height:479px;background:#131313;"></div>
<div class="a" style="left:1265px;top:236px;width:9px;height:86px;background:#949494;border-radius:4.5px;"></div>
<svg class="a" style="left:1265px;top:224px;" width="9" height="7" viewBox="0 0 9 7"><path d="M4.5 0.3 L8.8 6.8 L0.2 6.8 Z" fill="#a0a0a0"/></svg>
<svg class="a" style="left:1265px;top:687px;" width="9" height="7" viewBox="0 0 9 7"><path d="M4.5 6.8 L8.8 0.2 L0.2 0.2 Z" fill="#a0a0a0"/></svg>
<div class="a" style="left:0px;top:698px;width:1280px;height:32px;background:#0d0d0d;"></div>
<div class="a" style="left:116px;top:698px;width:78px;height:28px;background:#fff;border-radius:0 0 6px 6px;"></div>
<span class="t" style="top:703.0px;height:18px;line-height:18px;font-size:14px;color:#222;left:124px;transform-origin:0 50%;transform:scaleX(1.021);">Enter Info</span>
<div class="a" style="left:124px;top:721px;width:62px;height:2px;background:#1e6b41;"></div>
<span class="t" style="top:705.0px;height:18px;line-height:18px;font-size:14px;color:#fff;left:213px;transform-origin:0 50%;transform:scaleX(0.953);">Sales Tax Form Filled</span>
<span class="t" style="top:705.0px;height:18px;line-height:18px;font-size:14px;color:#fff;left:370px;transform-origin:0 50%;">Query</span>
<div class="a" style="left:198px;top:705px;width:1px;height:17px;background:#6a6a6a;"></div>
<div class="a" style="left:355px;top:705px;width:1px;height:17px;background:#6a6a6a;"></div>
<div class="a" style="left:419px;top:705px;width:1px;height:17px;background:#6a6a6a;"></div>
<div class="a" style="left:804px;top:709px;width:348.5px;height:8.6px;background:#9c9c9c;border-radius:4.3px;"></div>
<svg class="a" style="left:791.5px;top:708.5px;" width="8" height="10" viewBox="0 0 8 10"><path d="M7.5 0.5 L7.5 9.5 L0.5 5 Z" fill="#c8c8c8"/></svg>
<svg class="a" style="left:1249px;top:708.5px;" width="8" height="10" viewBox="0 0 8 10"><path d="M0.5 0.5 L0.5 9.5 L7.5 5 Z" fill="#c8c8c8"/></svg>
<div class="a" style="left:770px;top:709.6999999999999px;width:2.2px;height:2.2px;background:#e8e8e8;"></div>
<div class="a" style="left:770px;top:713.9px;width:2.2px;height:2.2px;background:#e8e8e8;"></div>
<div class="a" style="left:770px;top:718.1px;width:2.2px;height:2.2px;background:#e8e8e8;"></div>
<svg class="a" style="left:460.5px;top:706.7px;" width="14" height="14" viewBox="0 0 14 14"><path d="M7 0.5 V13.5 M0.5 7 H13.5" stroke="#d8d8d8" stroke-width="1.2" fill="none"/></svg>
<svg class="a" style="left:28px;top:708px;" width="8" height="11" viewBox="0 0 8 11"><path d="M6.5 1 L1.5 5.5 L6.5 10" stroke="#7a7a7a" stroke-width="1.4" fill="none"/></svg>
<svg class="a" style="left:60px;top:708px;" width="8" height="11" viewBox="0 0 8 11"><path d="M1.5 1 L6.5 5.5 L1.5 10" stroke="#7a7a7a" stroke-width="1.4" fill="none"/></svg>
<div class="a" style="left:0px;top:730px;width:1280px;height:22px;background:#0d0d0d;border-top:1px solid #2e2e2e;"></div>
<span class="t" style="top:733.0px;height:16px;line-height:16px;font-size:12px;color:#fff;left:12px;transform-origin:0 50%;transform:scaleX(0.941);">Enter</span>
<span class="t" style="top:733.0px;height:16px;line-height:16px;font-size:12px;color:#fff;font-weight:700;left:76px;transform-origin:0 50%;transform:scaleX(0.879);">Accessibility: Investigate</span>
<span class="t" style="top:733.5px;height:16px;line-height:16px;font-size:12px;color:#fff;left:880px;transform-origin:0 50%;transform:scaleX(0.941);">Display Settings</span>
<span class="t" style="top:733.5px;height:16px;line-height:16px;font-size:12px;color:#5a5a5a;left:1246px;transform-origin:0 50%;transform:scaleX(0.847);">100%</span>
<div class="a" style="left:1119px;top:740.6px;width:100px;height:1px;background:#b0b0b0;"></div>
<div class="a" style="left:1168.6px;top:737.6px;width:1px;height:7px;background:#b0b0b0;"></div>
<svg class="a" style="left:16px;top:16px;" width="16" height="16" viewBox="0 0 16 16"><rect x="4" y="0" width="12" height="15.5" rx="1" fill="#21a366"/>
<rect x="4" y="0" width="6" height="4" fill="#21a366"/><rect x="10" y="0" width="6" height="4" fill="#33c481"/>
<rect x="4" y="4" width="6" height="4" fill="#107c41"/><rect x="10" y="4" width="6" height="4" fill="#21a366"/>
<rect x="4" y="8" width="6" height="4" fill="#185c37"/><rect x="10" y="8" width="6" height="4" fill="#107c41"/>
<rect x="4" y="12" width="12" height="3.5" fill="#185c37"/>
<rect x="0" y="3.2" width="10.5" height="9.6" rx="1" fill="#107c41"/>
<path d="M2.9 5.3 L7.6 10.8 M7.6 5.3 L2.9 10.8" stroke="#fff" stroke-width="1.5"/></svg>
<svg class="a" style="left:165px;top:16px;" width="16" height="16" viewBox="0 0 16 16"><path d="M0.7 0.7 H14.3 V7 M0.7 0.7 V13 L2.7 15.3 H6.5 M3.6 0.7 V5.6 H11.2 V0.7 M3.9 15 V9.6 H7" stroke="#e8e8e8" stroke-width="1.3" fill="none"/>
<path d="M8 10.6 A3.6 3.6 0 0 1 14.6 9.4 M14.9 7.3 V9.7 H12.5 M15.2 12.2 A3.6 3.6 0 0 1 8.6 13.4 M8.3 15.5 V13.1 H10.7" stroke="#e8e8e8" stroke-width="1.2" fill="none"/></svg>
<svg class="a" style="left:194px;top:15px;" width="17" height="18" viewBox="0 0 17 18"><path d="M1.6 1.5 V7.6 H7.8 M2 7.2 C4.5 3.3 9.5 1.2 12.8 3.8 C15.6 6.2 14.6 10 12.2 12.2 L6.6 17" stroke="#e8e8e8" stroke-width="1.35" fill="none" stroke-linejoin="miter"/></svg>
<svg class="a" style="left:215.2px;top:21.25px;" width="6.6" height="4.5" viewBox="0 0 6.6 4.5"><path d="M1 1 L3.3 3.5 L5.6 1" stroke="#e8e8e8" stroke-width="1.5" fill="none" stroke-linecap="round" stroke-linejoin="round"/></svg>
<svg class="a" style="left:233px;top:15px;" width="17" height="18" viewBox="0 0 17 18"><path d="M15.4 1.5 V7.6 H9.2 M15 7.2 C12.5 3.3 7.5 1.2 4.2 3.8 C1.4 6.2 2.4 10 4.8 12.2 L10.4 17" stroke="#565656" stroke-width="1.35" fill="none"/></svg>
<svg class="a" style="left:254.2px;top:21.25px;" width="6.6" height="4.5" viewBox="0 0 6.6 4.5"><path d="M1 1 L3.3 3.5 L5.6 1" stroke="#4a4a4a" stroke-width="1.5" fill="none" stroke-linecap="round" stroke-linejoin="round"/></svg>
<svg class="a" style="left:275px;top:19px;" width="9" height="9" viewBox="0 0 9 9"><path d="M1 2 H8" stroke="#e8e8e8" stroke-width="1.3"/><path d="M1.2 5 L4.5 8 L7.8 5" stroke="#e8e8e8" stroke-width="1.5" fill="none"/></svg>
<svg class="a" style="left:555px;top:20px;" width="12" height="8" viewBox="0 0 12 8"><path d="M1 1.5 L5.7 6.5 L10.4 1.5" stroke="#e8e8e8" stroke-width="1.4" fill="none"/></svg>
<svg class="a" style="left:612px;top:14px;" width="18" height="18" viewBox="0 0 18 18"><circle cx="10.6" cy="7.4" r="4.9" stroke="#c8c8c8" stroke-width="1.2" fill="none"/><path d="M7.1 10.9 L1.8 16.4" stroke="#c8c8c8" stroke-width="1.3"/></svg>
<svg class="a" style="left:1106px;top:15px;" width="13" height="18" viewBox="0 0 13 18"><path d="M4 11.2 C3.6 9.3 1 8.3 1 5.4 A5.4 5.4 0 0 1 11.9 5.4 C11.9 8.3 9.3 9.3 8.9 11.2 Z M4.2 13.4 H8.8 M4.6 15.8 H8.4" stroke="#e8e8e8" stroke-width="1.25" fill="none"/></svg>
<div class="a" style="left:1155px;top:22.6px;width:10.5px;height:1.2px;background:#e8e8e8;"></div>
<svg class="a" style="left:1202px;top:18px;" width="12" height="12" viewBox="0 0 12 12"><rect x="0.8" y="2.8" width="8" height="8" rx="1.6" stroke="#e8e8e8" stroke-width="1.2" fill="none"/><path d="M3.2 0.8 H8.6 A2.4 2.4 0 0 1 11 3.2 V8.6" stroke="#e8e8e8" stroke-width="1.2" fill="none"/></svg>
<svg class="a" style="left:1251px;top:18px;" width="11" height="11" viewBox="0 0 11 11"><path d="M0.5 0.5 L10.5 10.5 M10.5 0.5 L0.5 10.5" stroke="#e8e8e8" stroke-width="1.2"/></svg>
<svg class="a" style="left:1104px;top:58px;" width="13" height="11" viewBox="0 0 13 11"><path d="M0.7 0.7 H11.3 V7.2 H5 L2.2 9.8 V7.2 H0.7 Z" stroke="#e8e8e8" stroke-width="1.2" fill="none" stroke-linejoin="round"/></svg>
<svg class="a" style="left:1202px;top:57px;" width="12" height="12" viewBox="0 0 12 12"><path d="M4.5 3.3 H0.7 V11 H9.2 V7.8" stroke="#111" stroke-width="1.2" fill="none"/><path d="M3.2 8.2 C3.6 5.2 5.4 3.6 8 3.6 V1.2 L11.4 4.6 L8 8 V5.8 C5.8 5.8 4.4 6.6 3.2 8.2 Z" stroke="#111" stroke-width="1.1" fill="none" stroke-linejoin="round"/></svg>
<svg class="a" style="left:1256.5px;top:61.2px;" width="7" height="4.6" viewBox="0 0 7 4.6"><path d="M1 1 L3.5 3.6 L6 1" stroke="#111" stroke-width="1.3" fill="none" stroke-linecap="round" stroke-linejoin="round"/></svg>
<svg class="a" style="left:108px;top:164px;" width="8" height="8" viewBox="0 0 8 8"><path d="M0.6 5.5 V0.6 H5.5" stroke="#d8d8d8" stroke-width="1.1" fill="none"/><path d="M2.6 2.6 L7.3 7.3 M7.4 3.6 V7.4 H3.6" stroke="#d8d8d8" stroke-width="1.1" fill="none"/></svg>
<svg class="a" style="left:344px;top:164px;" width="8" height="8" viewBox="0 0 8 8"><path d="M0.6 5.5 V0.6 H5.5" stroke="#d8d8d8" stroke-width="1.1" fill="none"/><path d="M2.6 2.6 L7.3 7.3 M7.4 3.6 V7.4 H3.6" stroke="#d8d8d8" stroke-width="1.1" fill="none"/></svg>
<svg class="a" style="left:549px;top:164px;" width="8" height="8" viewBox="0 0 8 8"><path d="M0.6 5.5 V0.6 H5.5" stroke="#5a5a5a" stroke-width="1.1" fill="none"/><path d="M2.6 2.6 L7.3 7.3 M7.4 3.6 V7.4 H3.6" stroke="#5a5a5a" stroke-width="1.1" fill="none"/></svg>
<svg class="a" style="left:656px;top:164px;" width="8" height="8" viewBox="0 0 8 8"><path d="M0.6 5.5 V0.6 H5.5" stroke="#5a5a5a" stroke-width="1.1" fill="none"/><path d="M2.6 2.6 L7.3 7.3 M7.4 3.6 V7.4 H3.6" stroke="#5a5a5a" stroke-width="1.1" fill="none"/></svg>
<svg class="a" style="left:30px;top:87px;" width="28" height="30" viewBox="0 0 28 30"><path d="M5.5 3 H1 V26.5 H13" stroke="#8c8c8c" stroke-width="2" fill="none"/><path d="M15.5 3 H20 V11" stroke="#8c8c8c" stroke-width="2" fill="none"/>
<path d="M5.2 6 V3.6 H8 A2.6 2.6 0 0 1 13 3.6 H15.8 V6 Z" stroke="#8c8c8c" stroke-width="1.3" fill="#292929"/>
<rect x="13.8" y="11.8" width="13" height="17.4" stroke="#8c8c8c" stroke-width="1.3" fill="#292929"/></svg>
<svg class="a" style="left:37.2px;top:142.75px;" width="6.6" height="4.5" viewBox="0 0 6.6 4.5"><path d="M1 1 L3.3 3.5 L5.6 1" stroke="#5a5a5a" stroke-width="1.5" fill="none" stroke-linecap="round" stroke-linejoin="round"/></svg>
<svg class="a" style="left:70px;top:86px;" width="12" height="17" viewBox="0 0 12 17"><path d="M2.8 0.8 L7.6 11.2 M9.2 0.8 L4.4 11.2" stroke="#d8d8d8" stroke-width="1.2" fill="none"/>
<circle cx="3.3" cy="13.4" r="1.9" stroke="#3a96dd" stroke-width="1.3" fill="none"/><circle cx="8.7" cy="13.4" r="1.9" stroke="#3a96dd" stroke-width="1.3" fill="none"/></svg>
<svg class="a" style="left:67px;top:111px;" width="18" height="18" viewBox="0 0 18 18"><path d="M6.5 13.6 H1.2 V1.2 H6.2 L8 3" stroke="#e8e8e8" stroke-width="1.2" fill="none"/>
<path d="M7 4.2 H12.6 L16.4 8 V16.6 H7 Z" stroke="#e8e8e8" stroke-width="1.2" fill="#292929"/><path d="M12.4 4.4 V8.2 H16.2" stroke="#e8e8e8" stroke-width="1.1" fill="none"/>
<path d="M9.4 10.6 H14 M9.4 13 H14" stroke="#e8e8e8" stroke-width="1.1"/></svg>
<svg class="a" style="left:96.5px;top:118.25px;" width="6.6" height="4.5" viewBox="0 0 6.6 4.5"><path d="M1 1 L3.3 3.5 L5.6 1" stroke="#e8e8e8" stroke-width="1.5" fill="none" stroke-linecap="round" stroke-linejoin="round"/></svg>
<svg class="a" style="left:67px;top:137px;" width="18" height="17" viewBox="0 0 18 17"><path d="M15.6 1.2 L17 2.6 L12.2 7.6 L10.6 6 Z" stroke="#c4c4c4" stroke-width="1.1" fill="none"/>
<path d="M9 4.6 L13.6 9.2 L12.2 10.4 L7.6 5.8 Z" fill="#c4c4c4"/>
<path d="M7.2 6.4 L1 10.2 L7.6 15.8 L11.6 10.8 Z" stroke="#c4c4c4" stroke-width="1.1" fill="#8a8a8a" fill-opacity="0.55"/></svg>
<div class="a" style="left:221px;top:122px;width:1px;height:25px;background:#505050;"></div>
<svg class="a" style="left:235.2px;top:100.25px;" width="6.6" height="4.5" viewBox="0 0 6.6 4.5"><path d="M1 1 L3.3 3.5 L5.6 1" stroke="#e8e8e8" stroke-width="1.5" fill="none" stroke-linecap="round" stroke-linejoin="round"/></svg>
<svg class="a" style="left:286.5px;top:100.25px;" width="6.6" height="4.5" viewBox="0 0 6.6 4.5"><path d="M1 1 L3.3 3.5 L5.6 1" stroke="#e8e8e8" stroke-width="1.5" fill="none" stroke-linecap="round" stroke-linejoin="round"/></svg>
<span class="t" style="top:90.0px;height:22px;line-height:22px;font-size:17px;color:#d0d0d0;left:302.8px;transform-origin:0 50%;transform:scaleX(1.005);">A</span>
<svg class="a" style="left:313.5px;top:94.5px;" width="6" height="4" viewBox="0 0 6 4"><path d="M0.8 3.2 L3 0.8 L5.2 3.2" stroke="#3a96dd" stroke-width="1.3" fill="none"/></svg>
<span class="t" style="top:93.2px;height:18px;line-height:18px;font-size:13.5px;color:#d0d0d0;left:330.6px;transform-origin:0 50%;">A</span>
<svg class="a" style="left:339px;top:94.5px;" width="6" height="4" viewBox="0 0 6 4"><path d="M0.8 0.8 L3 3.2 L5.2 0.8" stroke="#3a96dd" stroke-width="1.3" fill="none"/></svg>
<svg class="a" style="left:207.1px;top:132.15px;" width="6.6" height="4.5" viewBox="0 0 6.6 4.5"><path d="M1 1 L3.3 3.5 L5.6 1" stroke="#e8e8e8" stroke-width="1.5" fill="none" stroke-linecap="round" stroke-linejoin="round"/></svg>
<svg class="a" style="left:227px;top:125px;" width="17" height="17" viewBox="0 0 17 17"><path d="M1 1.5 H16 M1 7.5 H16 M1.5 1 V14 M8.5 1 V14 M15.5 1 V14" stroke="#c8c8c8" stroke-width="1" stroke-dasharray="1 1.4" fill="none"/><path d="M0.8 15.5 H16.2" stroke="#d8d8d8" stroke-width="1.3"/></svg>
<svg class="a" style="left:251.5px;top:132.15px;" width="6.6" height="4.5" viewBox="0 0 6.6 4.5"><path d="M1 1 L3.3 3.5 L5.6 1" stroke="#5a5a5a" stroke-width="1.5" fill="none" stroke-linecap="round" stroke-linejoin="round"/></svg>
<svg class="a" style="left:272px;top:125px;" width="17" height="17" viewBox="0 0 17 17"><path d="M6.2 2.6 L11.6 8 L7.4 12 L2.6 7.2 L6.8 3.2 V1.4 A1.4 1.4 0 0 1 9.4 1.4 V5.4" stroke="#c8c8c8" stroke-width="1.15" fill="none" stroke-linejoin="round"/><path d="M12.6 7.2 C13.8 8.8 14.4 9.6 14.4 10.6 A1.5 1.5 0 0 1 11.6 10.6 C11.6 9.6 12 8.8 12.6 7.2Z" fill="#c8c8c8"/><rect x="0" y="13" width="16" height="3.8" fill="#8a8a8a"/></svg>
<svg class="a" style="left:295.5px;top:132.15px;" width="6.6" height="4.5" viewBox="0 0 6.6 4.5"><path d="M1 1 L3.3 3.5 L5.6 1" stroke="#5a5a5a" stroke-width="1.5" fill="none" stroke-linecap="round" stroke-linejoin="round"/></svg>
<span class="t" style="top:122.0px;height:19px;line-height:19px;font-size:14.5px;color:#d8d8d8;left:316px;transform-origin:0 50%;transform:scaleX(1.034);">A</span>
<div class="a" style="left:312.5px;top:137.8px;width:17.5px;height:4.2px;background:#ee1111;"></div>
<svg class="a" style="left:336.09999999999997px;top:132.15px;" width="6.6" height="4.5" viewBox="0 0 6.6 4.5"><path d="M1 1 L3.3 3.5 L5.6 1" stroke="#e8e8e8" stroke-width="1.5" fill="none" stroke-linecap="round" stroke-linejoin="round"/></svg>
<div class="a" style="left:369px;top:93.9px;width:14px;height:1.1px;background:#c8c8c8;"></div>
<div class="a" style="left:371.5px;top:98.1px;width:9.5px;height:1.1px;background:#c8c8c8;"></div>
<div class="a" style="left:369px;top:102.3px;width:14px;height:1.1px;background:#c8c8c8;"></div>
<div class="a" style="left:395px;top:96.6px;width:14px;height:1.1px;background:#c8c8c8;"></div>
<div class="a" style="left:397.5px;top:100.8px;width:9.5px;height:1.1px;background:#c8c8c8;"></div>
<div class="a" style="left:395px;top:105.0px;width:14px;height:1.1px;background:#c8c8c8;"></div>
<div class="a" style="left:421px;top:100.8px;width:14px;height:1.1px;background:#c8c8c8;"></div>
<div class="a" style="left:423.5px;top:105.0px;width:9.5px;height:1.1px;background:#c8c8c8;"></div>
<div class="a" style="left:421px;top:109.1px;width:14px;height:1.1px;background:#c8c8c8;"></div>
<div class="a" style="left:369px;top:127.0px;width:14px;height:1.1px;background:#c8c8c8;"></div>
<div class="a" style="left:369px;top:131.0px;width:10px;height:1.1px;background:#c8c8c8;"></div>
<div class="a" style="left:369px;top:135.0px;width:14px;height:1.1px;background:#c8c8c8;"></div>
<div class="a" style="left:369px;top:139.0px;width:10px;height:1.1px;background:#c8c8c8;"></div>
<div class="a" style="left:395px;top:127.0px;width:14px;height:1.1px;background:#c8c8c8;"></div>
<div class="a" style="left:397.5px;top:131.0px;width:9.5px;height:1.1px;background:#c8c8c8;"></div>
<div class="a" style="left:395px;top:135.0px;width:14px;height:1.1px;background:#c8c8c8;"></div>
<div class="a" style="left:397.5px;top:139.0px;width:9.5px;height:1.1px;background:#c8c8c8;"></div>
<div class="a" style="left:421px;top:127.0px;width:14px;height:1.1px;background:#c8c8c8;"></div>
<div class="a" style="left:425px;top:131.0px;width:10px;height:1.1px;background:#c8c8c8;"></div>
<div class="a" style="left:421px;top:135.0px;width:14px;height:1.1px;background:#c8c8c8;"></div>
<div class="a" style="left:425px;top:139.0px;width:10px;height:1.1px;background:#c8c8c8;"></div>
<div class="a" style="left:447px;top:127.0px;width:14px;height:1.1px;background:#c8c8c8;"></div>
<div class="a" style="left:455px;top:131.0px;width:6px;height:1.1px;background:#c8c8c8;"></div>
<div class="a" style="left:455px;top:135.0px;width:6px;height:1.1px;background:#c8c8c8;"></div>
<div class="a" style="left:447px;top:139.0px;width:14px;height:1.1px;background:#c8c8c8;"></div>
<svg class="a" style="left:447px;top:130.5px;" width="7" height="6" viewBox="0 0 7 6"><path d="M0.6 3 H6.4 M3 0.6 L0.6 3 L3 5.4" stroke="#c8c8c8" stroke-width="1.05" fill="none"/></svg>
<div class="a" style="left:473px;top:127.0px;width:14px;height:1.1px;background:#c8c8c8;"></div>
<div class="a" style="left:481px;top:131.0px;width:6px;height:1.1px;background:#c8c8c8;"></div>
<div class="a" style="left:481px;top:135.0px;width:6px;height:1.1px;background:#c8c8c8;"></div>
<div class="a" style="left:473px;top:139.0px;width:14px;height:1.1px;background:#c8c8c8;"></div>
<svg class="a" style="left:473px;top:130.5px;" width="7" height="6" viewBox="0 0 7 6"><path d="M0.6 3 H6.4 M4 0.6 L6.4 3 L4 5.4" stroke="#c8c8c8" stroke-width="1.05" fill="none"/></svg>
<span class="t" style="left:444.5px;top:93px;font-size:11px;line-height:12px;color:#c8c8c8;transform:rotate(-45deg) scaleX(0.9);transform-origin:50% 50%;">ab</span>
<svg class="a" style="left:451px;top:97px;" width="12" height="12" viewBox="0 0 12 12"><path d="M1 11 L10.6 1.4 M6 1.2 H10.8 V6" stroke="#c8c8c8" stroke-width="1.05" fill="none"/></svg>
<svg class="a" style="left:467.3px;top:100.15px;" width="6.6" height="4.5" viewBox="0 0 6.6 4.5"><path d="M1 1 L3.3 3.5 L5.6 1" stroke="#5a5a5a" stroke-width="1.5" fill="none" stroke-linecap="round" stroke-linejoin="round"/></svg>
<span class="t" style="top:92.0px;height:14px;line-height:14px;font-size:10.5px;color:#c4c4c4;left:511.5px;transform-origin:0 50%;transform:scaleX(1.112);">ab</span>
<span class="t" style="top:98.8px;height:14px;line-height:14px;font-size:10.5px;color:#c4c4c4;left:511.5px;transform-origin:0 50%;transform:scaleX(0.952);">c</span>
<svg class="a" style="left:517px;top:101px;" width="9" height="9" viewBox="0 0 9 9"><path d="M6 0.6 C8.6 0.8 8.8 5.6 5.8 5.6 H0.8 M3.2 3 L0.8 5.6 L3.2 8.2" stroke="#c4c4c4" stroke-width="1.05" fill="none"/></svg>
<svg class="a" style="left:508.5px;top:126px;" width="16" height="15" viewBox="0 0 16 15"><rect x="0.6" y="0.6" width="14.6" height="13.6" stroke="#c4c4c4" stroke-width="1.05" fill="none"/><path d="M0.6 3.8 H15.2 M0.6 11 H15.2 M7.9 0.6 V3.8 M7.9 11 V14.2" stroke="#c4c4c4" stroke-width="1.05" fill="none"/>
<path d="M2.6 7.4 H13.2 M4.6 5.4 L2.6 7.4 L4.6 9.4 M11.2 5.4 L13.2 7.4 L11.2 9.4" stroke="#c4c4c4" stroke-width="1.05" fill="none"/></svg>
<svg class="a" style="left:537.2px;top:131.75px;" width="6.6" height="4.5" viewBox="0 0 6.6 4.5"><path d="M1 1 L3.3 3.5 L5.6 1" stroke="#5a5a5a" stroke-width="1.5" fill="none" stroke-linecap="round" stroke-linejoin="round"/></svg>
<svg class="a" style="left:650.0px;top:91.95px;" width="6.6" height="4.5" viewBox="0 0 6.6 4.5"><path d="M1 1 L3.3 3.5 L5.6 1" stroke="#8a8a8a" stroke-width="1.5" fill="none" stroke-linecap="round" stroke-linejoin="round"/></svg>
<svg class="a" style="left:596.3000000000001px;top:118.25px;" width="6.6" height="4.5" viewBox="0 0 6.6 4.5"><path d="M1 1 L3.3 3.5 L5.6 1" stroke="#5a5a5a" stroke-width="1.5" fill="none" stroke-linecap="round" stroke-linejoin="round"/></svg>
<span class="t" style="top:135.9px;height:12px;line-height:12px;font-size:9.5px;color:#b8b8b8;left:582.5px;transform-origin:0 50%;transform:scaleX(0.944);">0</span>
<span class="t" style="top:143.4px;height:12px;line-height:12px;font-size:9.5px;color:#b8b8b8;left:575.5px;transform-origin:0 50%;transform:scaleX(0.908);">.00</span>
<svg class="a" style="left:573px;top:139.20000000000002px;" width="10" height="6" viewBox="0 0 10 6"><path d="M0.6 3 H9 M3.2 0.4 L0.6 3 L3.2 5.6" stroke="#b8b8b8" stroke-width="1" fill="none"/></svg>
<span class="t" style="top:135.9px;height:12px;line-height:12px;font-size:9.5px;color:#b8b8b8;left:601.5px;transform-origin:0 50%;transform:scaleX(0.908);">.00</span>
<span class="t" style="top:143.4px;height:12px;line-height:12px;font-size:9.5px;color:#b8b8b8;left:606.5px;transform-origin:0 50%;transform:scaleX(0.945);">.0</span>
<svg class="a" style="left:598.5px;top:146.4px;" width="10" height="6" viewBox="0 0 10 6"><path d="M0.4 3 H8.6 M6 0.4 L8.6 3 L6 5.6" stroke="#b8b8b8" stroke-width="1" fill="none"/></svg>
<svg class="a" style="left:680px;top:87.2px;" width="17" height="15" viewBox="0 0 17 15"><rect x="0.55" y="0.55" width="14.9" height="12.5" stroke="#a4a4a4" stroke-width="1.1" fill="none"/><rect x="4.4" y="0.6" width="3.6" height="4" fill="#7c7c7c"/><rect x="4.4" y="9.4" width="6" height="3.6" fill="#7c7c7c"/><path d="M0.6 4.6 H15.4 M0.6 9.2 H15.4 M4.2 0.6 V13 M13 0.6 V13 M8.2 4.6 V9.2" stroke="#a4a4a4" stroke-width="1.05" fill="none"/><rect x="8.6" y="5" width="4" height="3.8" fill="#3a3a3a"/></svg>
<svg class="a" style="left:680px;top:113.3px;" width="17" height="15" viewBox="0 0 17 15"><rect x="0.55" y="0.55" width="14.9" height="12.5" stroke="#a4a4a4" stroke-width="1.1" fill="none"/><path d="M0.6 4.4 H15.4 M0.6 9 H15.4 M5.4 0.6 V13 M10.4 0.6 V13" stroke="#a4a4a4" stroke-width="1.05" fill="none"/><rect x="6" y="5" width="4" height="3.6" fill="#7c7c7c"/><path d="M15.6 5.6 L7.6 13.6 L4.4 14.6 L5.6 11.6 L13.6 3.6 Z" fill="#7c7c7c" stroke="#a4a4a4" stroke-width="1"/></svg>
<svg class="a" style="left:680px;top:139px;" width="17" height="15" viewBox="0 0 17 15"><rect x="0.55" y="0.55" width="14.9" height="12.5" stroke="#a4a4a4" stroke-width="1.1" fill="none"/><path d="M0.6 3.4 H15.4 M3.6 0.6 V13" stroke="#a4a4a4" stroke-width="1.05" fill="none"/><rect x="4.2" y="4" width="8" height="6" fill="#7c7c7c"/><path d="M15.6 5.6 L7.6 13.6 L4.4 14.6 L5.6 11.6 L13.6 3.6 Z" fill="#7c7c7c" stroke="#a4a4a4" stroke-width="1"/></svg>
<svg class="a" style="left:827.2px;top:93.25px;" width="6.6" height="4.5" viewBox="0 0 6.6 4.5"><path d="M1 1 L3.3 3.5 L5.6 1" stroke="#5a5a5a" stroke-width="1.5" fill="none" stroke-linecap="round" stroke-linejoin="round"/></svg>
<svg class="a" style="left:786.7px;top:119.25px;" width="6.6" height="4.5" viewBox="0 0 6.6 4.5"><path d="M1 1 L3.3 3.5 L5.6 1" stroke="#5a5a5a" stroke-width="1.5" fill="none" stroke-linecap="round" stroke-linejoin="round"/></svg>
<svg class="a" style="left:756.2px;top:145.25px;" width="6.6" height="4.5" viewBox="0 0 6.6 4.5"><path d="M1 1 L3.3 3.5 L5.6 1" stroke="#5a5a5a" stroke-width="1.5" fill="none" stroke-linecap="round" stroke-linejoin="round"/></svg>
<svg class="a" style="left:864px;top:87.2px;" width="17" height="15" viewBox="0 0 17 15"><rect x="0.55" y="0.55" width="14.9" height="12.5" stroke="#a4a4a4" stroke-width="1.1" fill="none"/><path d="M0.6 4.4 H15.4 M0.6 9 H15.4 M5.4 0.6 V4.4 M10.4 0.6 V4.4 M5.4 9 V13 M10.4 9 V13 M10.4 4.4 V9" stroke="#a4a4a4" stroke-width="1.05" fill="none"/><rect x="7.6" y="5" width="7.4" height="3.6" fill="#7c7c7c"/><path d="M1.2 6.7 H8 M3.6 4.3 L1.2 6.7 L3.6 9.1" stroke="#a4a4a4" stroke-width="1.05" fill="none"/></svg>
<svg class="a" style="left:864px;top:113.3px;" width="17" height="15" viewBox="0 0 17 15"><path d="M0.55 4.4 V0.55 H15.4 V4.4 H0.55 M0.55 9 H15.4 V13 H0.55 Z M5.4 0.6 V4.4 M10.4 0.6 V4.4 M5.4 9 V13 M10.4 9 V13" stroke="#a4a4a4" stroke-width="1.05" fill="none"/><rect x="3.4" y="4.6" width="5" height="4.2" stroke="#a4a4a4" stroke-width="1" fill="#7c7c7c"/><path d="M10.6 4.6 L15 9 M15 4.6 L10.6 9" stroke="#a4a4a4" stroke-width="1.05"/></svg>
<svg class="a" style="left:864px;top:138px;" width="17" height="16" viewBox="0 0 17 16"><path d="M3.4 1.4 H12.6 M3.4 0.2 V2.6 M12.6 0.2 V2.6" stroke="#3a96dd" stroke-width="1.05" fill="none"/>
<rect x="0.55" y="3.4" width="14.9" height="12" stroke="#e0e0e0" stroke-width="1.1" fill="none"/><path d="M0.6 6.4 H15.4 M0.6 12.4 H15.4 M3.6 3.4 V15.4 M12.4 3.4 V15.4" stroke="#e0e0e0" stroke-width="1.05" fill="none"/><rect x="4.2" y="7" width="7.6" height="4.8" fill="#1f6fd0"/></svg>
<svg class="a" style="left:929.7px;top:93.25px;" width="6.6" height="4.5" viewBox="0 0 6.6 4.5"><path d="M1 1 L3.3 3.5 L5.6 1" stroke="#5a5a5a" stroke-width="1.5" fill="none" stroke-linecap="round" stroke-linejoin="round"/></svg>
<svg class="a" style="left:933.7px;top:119.25px;" width="6.6" height="4.5" viewBox="0 0 6.6 4.5"><path d="M1 1 L3.3 3.5 L5.6 1" stroke="#5a5a5a" stroke-width="1.5" fill="none" stroke-linecap="round" stroke-linejoin="round"/></svg>
<svg class="a" style="left:925.2px;top:145.25px;" width="6.6" height="4.5" viewBox="0 0 6.6 4.5"><path d="M1 1 L3.3 3.5 L5.6 1" stroke="#e8e8e8" stroke-width="1.5" fill="none" stroke-linecap="round" stroke-linejoin="round"/></svg>
<svg class="a" style="left:971px;top:86.5px;" width="14" height="15" viewBox="0 0 14 15"><path d="M12.6 3 V0.8 H1 L7 7.4 L1 14.2 H12.6 V12" stroke="#e0e0e0" stroke-width="1.25" fill="none" stroke-linejoin="miter"/></svg>
<svg class="a" style="left:998.3000000000001px;top:92.05px;" width="6.6" height="4.5" viewBox="0 0 6.6 4.5"><path d="M1 1 L3.3 3.5 L5.6 1" stroke="#e8e8e8" stroke-width="1.5" fill="none" stroke-linecap="round" stroke-linejoin="round"/></svg>
<svg class="a" style="left:970px;top:113px;" width="17" height="15" viewBox="0 0 17 15"><rect x="0.55" y="0.55" width="14.9" height="12.9" stroke="#b0b0b0" stroke-width="1.1" fill="none"/><path d="M0.6 2.8 H15.4 M8 4.6 V11 M5.4 8.4 L8 11 L10.6 8.4" stroke="#b0b0b0" stroke-width="1.05" fill="none"/></svg>
<svg class="a" style="left:991.3000000000001px;top:118.15px;" width="6.6" height="4.5" viewBox="0 0 6.6 4.5"><path d="M1 1 L3.3 3.5 L5.6 1" stroke="#5a5a5a" stroke-width="1.5" fill="none" stroke-linecap="round" stroke-linejoin="round"/></svg>
<svg class="a" style="left:969.5px;top:137.5px;" width="17" height="17" viewBox="0 0 17 17"><path d="M10.4 1.2 L15 5.8 L5.8 15 L1.2 10.4 Z" stroke="#c86ac8" stroke-width="1.2" fill="none" stroke-linejoin="round"/><path d="M4.9 6.7 L9.5 11.3 L5.8 15 L1.2 10.4 Z" fill="#b44cb4" stroke="#c86ac8" stroke-width="1.2" stroke-linejoin="round"/></svg>
<svg class="a" style="left:991.0px;top:143.95px;" width="6.6" height="4.5" viewBox="0 0 6.6 4.5"><path d="M1 1 L3.3 3.5 L5.6 1" stroke="#e8e8e8" stroke-width="1.5" fill="none" stroke-linecap="round" stroke-linejoin="round"/></svg>
<span class="t" style="top:84.0px;height:20px;line-height:20px;font-size:15px;color:#8e8e8e;left:1023.3px;transform-origin:0 50%;transform:scaleX(0.959);">A</span>
<span class="t" style="top:98.6px;height:20px;line-height:20px;font-size:15px;color:#8e8e8e;left:1023.3px;transform-origin:0 50%;transform:scaleX(0.916);">Z</span>
<svg class="a" style="left:1035px;top:94px;" width="17" height="16" viewBox="0 0 17 16"><path d="M0.6 0.6 H16 L9.8 7.6 V14.6 H6.8 V7.6 Z" stroke="#8e8e8e" stroke-width="1.15" fill="none" stroke-linejoin="miter"/></svg>
<svg class="a" style="left:1047.2px;top:141.55px;" width="6.6" height="4.5" viewBox="0 0 6.6 4.5"><path d="M1 1 L3.3 3.5 L5.6 1" stroke="#5a5a5a" stroke-width="1.5" fill="none" stroke-linecap="round" stroke-linejoin="round"/></svg>
<svg class="a" style="left:1066px;top:85px;" width="34" height="32" viewBox="0 0 34 32"><circle cx="20.6" cy="12.6" r="10.2" stroke="#d4d4d4" stroke-width="1.25" fill="none"/><path d="M13.2 19.8 L2.4 30.4" stroke="#d4d4d4" stroke-width="1.3"/></svg>
<svg class="a" style="left:1096.4px;top:141.55px;" width="6.6" height="4.5" viewBox="0 0 6.6 4.5"><path d="M1 1 L3.3 3.5 L5.6 1" stroke="#e8e8e8" stroke-width="1.5" fill="none" stroke-linecap="round" stroke-linejoin="round"/></svg>
<svg class="a" style="left:1132px;top:87.3px;" width="28" height="28" viewBox="0 0 28 28"><rect x="0.6" y="0.6" width="26.8" height="26.4" stroke="#5e5e5e" stroke-width="1.1" fill="none"/><rect x="3.4" y="3.4" width="8.6" height="8.6" stroke="#5e5e5e" stroke-width="1.1" fill="none"/><rect x="15.6" y="3.4" width="8.6" height="8.6" stroke="#5e5e5e" stroke-width="1.1" fill="none"/><rect x="3.4" y="15.4" width="8.6" height="8.6" stroke="#5e5e5e" stroke-width="1.1" fill="none"/><rect x="15.6" y="15.4" width="8.6" height="8.6" stroke="#5e5e5e" stroke-width="1.1" fill="none"/></svg>
<svg class="a" style="left:1195px;top:87.3px;" width="28" height="28" viewBox="0 0 28 28"><rect x="0.6" y="0.6" width="26.8" height="26.4" stroke="#8c8c8c" stroke-width="1.2" fill="none"/><rect x="0.6" y="0.6" width="26.8" height="3.2" fill="#8c8c8c"/><path d="M0.6 11.4 H27.4 M0.6 19.4 H27.4 M9.6 3.8 V27 M18.6 3.8 V27" stroke="#8c8c8c" stroke-width="1.1" fill="none"/><circle cx="13" cy="11.4" r="8.4" fill="#292929" stroke="#8c8c8c" stroke-width="1.3"/><rect x="8.6" y="10.6" width="2.4" height="4.4" fill="#8c8c8c"/><rect x="11.8" y="6.6" width="2.6" height="8.4" fill="#8c8c8c"/><rect x="15.2" y="8.8" width="2.4" height="6.2" fill="#8c8c8c"/><path d="M19 17.6 L27.6 26.6" stroke="#8c8c8c" stroke-width="1.6"/></svg>
<svg class="a" style="left:1251.5px;top:161.5px;" width="12" height="7" viewBox="0 0 12 7"><path d="M1 1 L6 5.6 L11 1" stroke="#e8e8e8" stroke-width="1.3" fill="none"/></svg>
<svg class="a" style="left:91px;top:197px;" width="12" height="7" viewBox="0 0 12 7"><path d="M0.8 0.8 L5.7 5.4 L10.6 0.8" stroke="#d4d4d4" stroke-width="1.3" fill="none"/></svg>
<svg class="a" style="left:136.5px;top:192.5px;" width="14" height="14" viewBox="0 0 14 14"><path d="M0.8 0.8 L12.4 12.4 M12.4 0.8 L0.8 12.4" stroke="#d4485c" stroke-width="1.35"/></svg>
<svg class="a" style="left:158.5px;top:192px;" width="18" height="13" viewBox="0 0 18 13"><path d="M0.8 7 L5.6 11.6 L16.6 1" stroke="#52b068" stroke-width="1.35" fill="none"/></svg>
<svg class="a" style="left:203px;top:197px;" width="12" height="7" viewBox="0 0 12 7"><path d="M0.8 0.8 L5.5 5.2 L10.2 0.8" stroke="#9a9a9a" stroke-width="1.3" fill="none"/></svg>
<svg class="a" style="left:1256.5px;top:194.5px;" width="13" height="8" viewBox="0 0 13 8"><path d="M0.8 0.8 L5.7 5.4 L10.6 0.8" stroke="#d4d4d4" stroke-width="1.3" fill="none"/></svg>
<svg class="a" style="left:57.5px;top:733.5px;" width="15" height="15" viewBox="0 0 15 15"><circle cx="6.6" cy="1.9" r="1.5" stroke="#e0e0e0" stroke-width="1" fill="none"/>
<path d="M0.8 4.2 L4.6 5.4 H8.6 L12.4 4.2 M4.6 5.4 V9 L2.4 13.6 M8.6 5.4 V8.4 M6.6 8.6 L5.4 11" stroke="#e0e0e0" stroke-width="1.05" fill="none"/>
<path d="M8.2 9.2 L13.8 14.4 M13.8 9.2 L8.2 14.4" stroke="#e0e0e0" stroke-width="1.15"/></svg>
<svg class="a" style="left:861.5px;top:735px;" width="15" height="13" viewBox="0 0 15 13"><path d="M5.4 8.6 H0.6 V0.6 H12.6 V4.4 M2.6 10.8 H5" stroke="#e0e0e0" stroke-width="1.1" fill="none"/>
<circle cx="10.4" cy="8.6" r="2.2" stroke="#e0e0e0" stroke-width="1.5" fill="none" stroke-dasharray="1.3 1"/><circle cx="10.4" cy="8.6" r="3.3" stroke="#e0e0e0" stroke-width="1.3" fill="none" stroke-dasharray="1.6 1.0"/></svg>
<svg class="a" style="left:993px;top:734px;" width="14" height="14" viewBox="0 0 14 14"><rect x="0.6" y="0.6" width="12.4" height="12.4" stroke="#5c5c5c" stroke-width="1.1" fill="none"/><path d="M0.6 4.7 H13 M0.6 8.9 H13 M4.7 0.6 V13 M8.9 0.6 V13" stroke="#5c5c5c" stroke-width="1.05" fill="none"/></svg>
<svg class="a" style="left:1033px;top:734px;" width="14" height="14" viewBox="0 0 14 14"><rect x="0.6" y="0.6" width="12.8" height="12.4" stroke="#5c5c5c" stroke-width="1.1" fill="none"/><rect x="3.4" y="3.2" width="7.2" height="7.4" stroke="#5c5c5c" stroke-width="1" fill="none"/><path d="M5 5.4 H9 M5 7 H9 M5 8.6 H9" stroke="#5c5c5c" stroke-width="0.8"/></svg>
<svg class="a" style="left:1073.5px;top:734px;" width="14" height="14" viewBox="0 0 14 14"><rect x="0.6" y="0.6" width="12.4" height="12.4" stroke="#5c5c5c" stroke-width="1.1" fill="none"/><path d="M4 0.6 V6.8 H13 M8.6 0.6 V6.8" stroke="#5c5c5c" stroke-width="1.05" fill="none"/></svg>
<div class="a" style="left:1106px;top:740.6px;width:7.5px;height:1px;background:#5c5c5c;"></div>
<div class="a" style="left:1223.5px;top:740.6px;width:7.5px;height:1px;background:#5c5c5c;"></div>
<div class="a" style="left:1226.8px;top:737.3px;width:1px;height:7.6px;background:#5c5c5c;"></div>
</body></html>
